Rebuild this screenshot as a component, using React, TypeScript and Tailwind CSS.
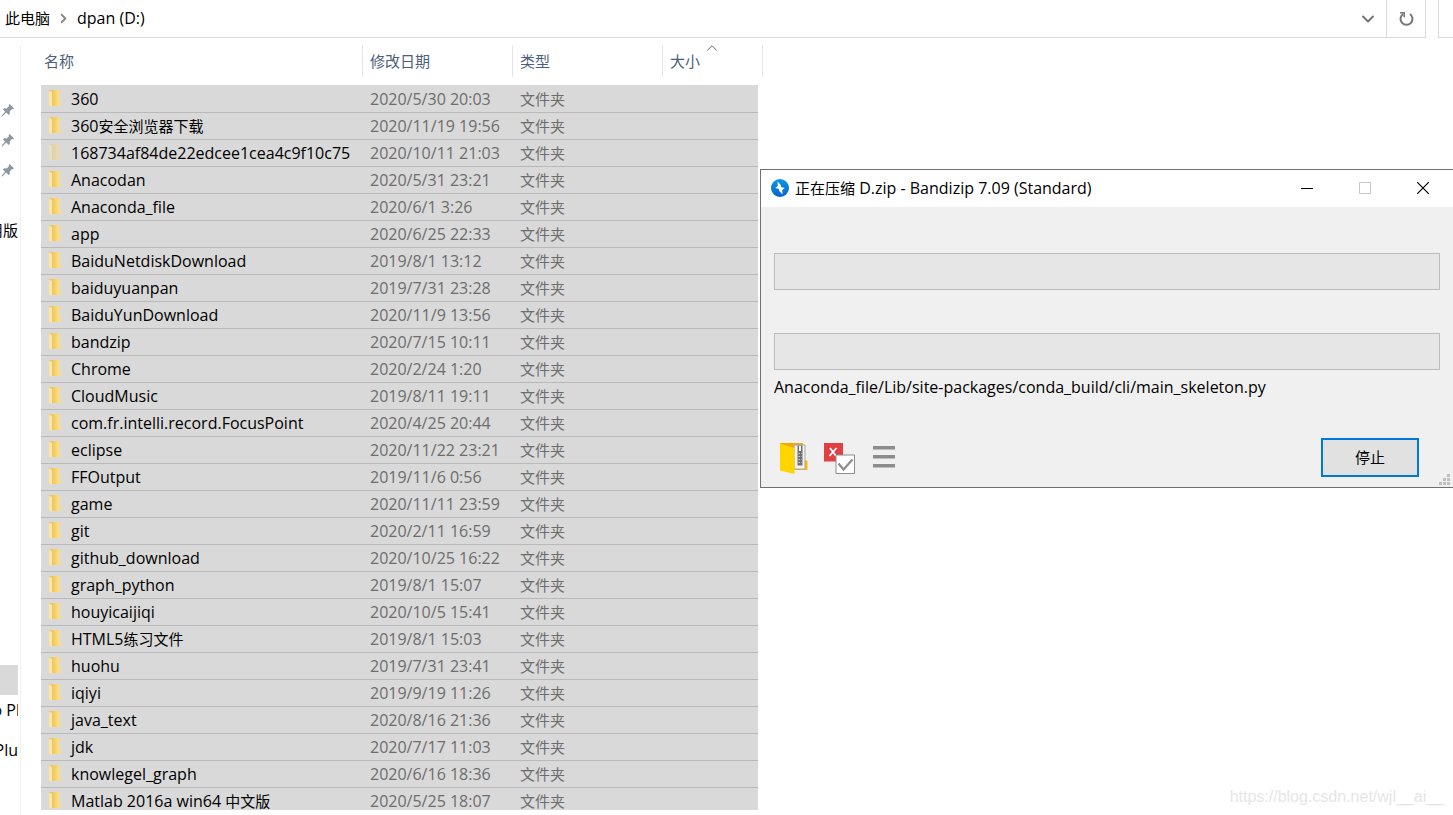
import { ChevronDown, ChevronRight, ChevronUp } from 'lucide-react';

interface Folder {
  name: string;
  date: string;
  hidden?: boolean;
}

const FOLDERS: Folder[] = [
  { name: '360', date: '2020/5/30 20:03' },
  { name: '360安全浏览器下载', date: '2020/11/19 19:56' },
  { name: '168734af84de22edcee1cea4c9f10c75', date: '2020/10/11 21:03', hidden: true },
  { name: 'Anacodan', date: '2020/5/31 23:21' },
  { name: 'Anaconda_file', date: '2020/6/1 3:26' },
  { name: 'app', date: '2020/6/25 22:33' },
  { name: 'BaiduNetdiskDownload', date: '2019/8/1 13:12' },
  { name: 'baiduyuanpan', date: '2019/7/31 23:28' },
  { name: 'BaiduYunDownload', date: '2020/11/9 13:56' },
  { name: 'bandzip', date: '2020/7/15 10:11' },
  { name: 'Chrome', date: '2020/2/24 1:20' },
  { name: 'CloudMusic', date: '2019/8/11 19:11' },
  { name: 'com.fr.intelli.record.FocusPoint', date: '2020/4/25 20:44' },
  { name: 'eclipse', date: '2020/11/22 23:21' },
  { name: 'FFOutput', date: '2019/11/6 0:56' },
  { name: 'game', date: '2020/11/11 23:59' },
  { name: 'git', date: '2020/2/11 16:59' },
  { name: 'github_download', date: '2020/10/25 16:22' },
  { name: 'graph_python', date: '2019/8/1 15:07' },
  { name: 'houyicaijiqi', date: '2020/10/5 15:41' },
  { name: 'HTML5练习文件', date: '2019/8/1 15:03' },
  { name: 'huohu', date: '2019/7/31 23:41' },
  { name: 'iqiyi', date: '2019/9/19 11:26' },
  { name: 'java_text', date: '2020/8/16 21:36' },
  { name: 'jdk', date: '2020/7/17 11:03' },
  { name: 'knowlegel_graph', date: '2020/6/16 18:36' },
  { name: 'Matlab 2016a win64 中文版', date: '2020/5/25 18:07' },
];

// Chinese runs are set one pixel smaller than the Latin text around them
function Label({ text }: { text: string }) {
  return (
    <>
      {text.split(/([\u4e00-\u9fff]+)/).map((part, i) =>
        i % 2 ? <span key={i} className="text-[15px]">{part}</span> : part
      )}
    </>
  );
}

function FolderIcon({ hidden }: { hidden?: boolean }) {
  return (
    <svg width="13" height="18" viewBox="0 0 13 18" className={hidden ? 'opacity-40' : ''} aria-hidden="true">
      <defs>
        <linearGradient id="folder" x1="0" y1="0" x2="1" y2="0">
          <stop offset="0.3" stopColor="#ebc765" />
          <stop offset="0.8" stopColor="#fcdc7c" />
        </linearGradient>
      </defs>
      <path d="M1 0h10.500v10.500l1 1v4.500H4z" fill="url(#folder)" />
      <path d="M1 0.500l3 1.500v15L1 15.500z" fill="#ffe6a0" />
    </svg>
  );
}

function PinIcon() {
  return (
    <svg width="14" height="14" viewBox="0 0 14 14" fill="#8b98a3" aria-hidden="true">
      <path d="M8.500 1l4.500 4.200-1 1.100-1-.2-2.300 2.400.2 2.300-1.200 1.300-2.500-2.500L1.500 13.200 0.600 13.400 0.800 12.500 4.100 8.700 1.900 6.400 3.200 5.300l2.300.2L8 3.200 7.600 2z" />
    </svg>
  );
}

function RefreshIcon() {
  return (
    <svg width="16" height="16" viewBox="0 0 16 16" fill="none" stroke="#767676" strokeWidth="2" aria-hidden="true">
      <path d="M12 3A6 6 0 1 1 5 3" />
      <path d="M2 1.800H6.200v4.500" strokeWidth="1.600" />
    </svg>
  );
}

function BandizipLogo() {
  return (
    <svg width="18" height="18" viewBox="0 0 18 18" aria-hidden="true">
      <defs>
        <linearGradient id="logo" x1="0" y1="0" x2="0" y2="1">
          <stop offset="0" stopColor="#0a97e6" />
          <stop offset="1" stopColor="#0663cf" />
        </linearGradient>
      </defs>
      <circle cx="9" cy="9" r="9" fill="url(#logo)" />
      <path d="M6.600 2.600L10 6.200 9.900 8 13.800 9 11.200 11 11.600 15.400 8 11.800 8.100 10 4.200 8.900 6.800 7z" fill="#fff" />
    </svg>
  );
}

function ZipFolderIcon() {
  return (
    <svg width="28" height="32" viewBox="0 0 28 32" aria-hidden="true">
      <path d="M0 1h23v5H0z" fill="#f5a900" />
      <path d="M20 18h6l1.500 1.500V28H14z" fill="#ffb900" />
      <path d="M14 3h11v24H14z" fill="#f3f3f3" stroke="#a5a5a5" />
      <path d="M17.500 3.500h5v20h-5z" fill="#707070" />
      <path d="M19 4h2v5h-2z" fill="#f5f5f5" />
      <path d="M18.500 11.500h3M18.500 14.500h3M18.500 17.500h3M18.500 20.500h3" stroke="#d0d0d0" strokeDasharray="1.500 1" />
      <path d="M0 1.500l14.500 4.500V32L0 28.500z" fill="#ffd500" />
    </svg>
  );
}

function ResultIcon() {
  return (
    <svg width="32" height="32" viewBox="0 0 32 32" fill="none" aria-hidden="true">
      <path d="M0 1h19v18.500H0z" fill="#e04043" />
      <path d="M6 6l6 8M12.500 6l-7 8" stroke="#fff" strokeWidth="1.800" />
      <path d="M12 13h18.500v18.500H12z" fill="#fff" stroke="#8d8d8d" />
      <path d="M14.500 21.500l5 6 9-10" stroke="#8d8d8d" strokeWidth="2.200" />
    </svg>
  );
}

function MenuIcon() {
  return (
    <svg width="22" height="24" viewBox="0 0 22 24" fill="#8c8c8c" aria-hidden="true">
      <path d="M0 0h22v3.500H0zM0 9h22v3.500H0zM0 18h22v3.500H0z" />
    </svg>
  );
}

function ResizeGrip() {
  return (
    <svg width="11" height="11" viewBox="0 0 11 11" fill="#bfbfbf" className="absolute right-[3px] bottom-[2px]" aria-hidden="true">
      <path d="M8 0h3v3H8zM4 4h3v3H4zM8 4h3v3H8zM0 8h3v3H0zM4 8h3v3H4zM8 8h3v3H8z" />
    </svg>
  );
}

function AddressBar() {
  return (
    <header className="flex h-[38px] shrink-0 gap-3">
      <div className="flex min-w-0 flex-1 border-r border-b border-[#d9d9d9]">
        <nav className="flex flex-1 items-center pb-px pl-[5px]" aria-label="路径">
          <a href="#pc" className="text-[15px]">此电脑</a>
          <ChevronRight size={15} strokeWidth={3} className="mx-[6px] text-[#8a8a8a]" />
          <a href="#d">dpan (D:)</a>
        </nav>
        <button type="button" aria-label="历史" className="flex w-9 items-center justify-center text-[#767676]">
          <ChevronDown size={20} strokeWidth={2.5} />
        </button>
        <button type="button" aria-label="刷新" className="flex w-[39px] items-center justify-center border-l border-[#d9d9d9]">
          <RefreshIcon />
        </button>
      </div>
      <div className="w-[15px] border-b border-l border-[#d9d9d9]" />
    </header>
  );
}

function Sidebar() {
  return (
    <aside className="mt-[7px] w-[21px] shrink-0 overflow-hidden border-r border-[#f0f0f0] pt-[50px] pr-[2px]">
      {[0, 1, 2].map((i) => (
        <div key={i} className="flex h-[30px] items-center pl-px">
          <PinIcon />
        </div>
      ))}
      <div className="mt-[30px] flex h-[30px] items-center justify-end overflow-hidden text-[15px] whitespace-nowrap">用版</div>
      <div className="mt-[420px] h-[30px] bg-[#d9d9d9]" />
      <div className="flex h-[30px] items-center justify-end overflow-hidden whitespace-nowrap">
        <span className="-mr-[2px]">o Pl</span>
      </div>
      <div className="mt-[10px] flex h-[30px] items-center justify-end overflow-hidden whitespace-nowrap">Plu</div>
    </aside>
  );
}

function FileList() {
  return (
    <main className="mt-[7px] mb-[5px] ml-5 overflow-hidden">
      <table className="w-[722px] table-fixed border-separate border-spacing-0 text-left whitespace-nowrap">
        <thead>
          <tr className="h-8 text-[15px] text-[#4c607a]">
            <th className="w-[322px] border-r border-[#e5e5e5] p-0 pl-[3px] font-normal">名称</th>
            <th className="w-[150px] border-r border-[#e5e5e5] p-0 pl-[7px] font-normal">修改日期</th>
            <th className="w-[150px] border-r border-[#e5e5e5] p-0 pl-[7px] font-normal">类型</th>
            <th className="relative w-[100px] border-r border-[#e5e5e5] p-0 pl-[7px] font-normal">
              大小
              <ChevronUp size={18} strokeWidth={1} className="absolute -top-[6px] left-10 text-[#333]" />
            </th>
          </tr>
          <tr className="h-2" />
        </thead>
        <tbody className="text-[#6d6d6d]">
          {FOLDERS.map((f) => (
            <tr key={f.name} className="group h-[27px]">
              <td className="border-t border-[#b9b9b9] bg-[#d9d9d9] p-0 pl-[7px] text-black group-first:border-[#d9d9d9]">
                <div className="flex h-[26px] items-center gap-[10px]">
                  <FolderIcon hidden={f.hidden} />
                  <span><Label text={f.name} /></span>
                </div>
              </td>
              <td className="border-t border-[#b9b9b9] bg-[#d9d9d9] p-0 pl-[7px] group-first:border-[#d9d9d9]">{f.date}</td>
              <td className="border-t border-[#b9b9b9] bg-[#d9d9d9] p-0 pl-[7px] text-[15px] group-first:border-[#d9d9d9]">文件夹</td>
              <td className="p-0 pr-[5px]">
                <div className="h-[27px] border-t border-[#b9b9b9] bg-[#d9d9d9] group-first:border-[#d9d9d9]" />
              </td>
            </tr>
          ))}
        </tbody>
      </table>
    </main>
  );
}

function CompressDialog() {
  return (
    <section role="dialog" aria-labelledby="dialog-title" className="absolute top-[169px] right-0 left-[760px] border-y border-l border-[#707070] bg-[#f0f0f0]">
      <div className="flex h-[37px] bg-white pr-px pb-px pl-[10px]">
        <h1 id="dialog-title" className="flex flex-1 items-center gap-[6px] whitespace-nowrap">
          <BandizipLogo />
          <span><Label text="正在压缩 D.zip - Bandizip 7.09 (Standard)" /></span>
        </h1>
        <button type="button" aria-label="最小化" className="flex w-[58px] items-center justify-center">
          <span className="h-px w-3 bg-black" />
        </button>
        <button type="button" aria-label="最大化" disabled className="flex w-[58px] items-center justify-center">
          <span className="size-3 border border-[#c8c8c8]" />
        </button>
        <button type="button" aria-label="关闭" className="flex w-[58px] items-center justify-center">
          <svg width="12" height="12" viewBox="0 0 12 12" stroke="#000" strokeWidth="1.200" aria-hidden="true">
            <path d="M0 0l12 12M12 0L0 12" />
          </svg>
        </button>
      </div>
      <div className="px-[13px] pt-[46px] pb-[10px]">
        <div role="progressbar" aria-label="当前文件" className="h-[37px] border border-[#bcbcbc] bg-[#e6e6e6]" />
        <div role="progressbar" aria-label="总进度" className="mt-[43px] h-[37px] border border-[#bcbcbc] bg-[#e6e6e6]" />
        <p className="mt-[5px] leading-6 whitespace-nowrap">Anaconda_file/Lib/site-packages/conda_build/cli/main_skeleton.py</p>
        <div className="mt-[39px] flex items-center pr-[21px] pl-[6px]">
          <button type="button" aria-label="打开文件夹"><ZipFolderIcon /></button>
          <button type="button" aria-label="完成后的操作" className="ml-4"><ResultIcon /></button>
          <button type="button" aria-label="菜单" className="ml-[17px]"><MenuIcon /></button>
          <button type="button" className="ml-auto h-[39px] w-[98px] border-2 border-[#0078d7] bg-[#e1e1e1] pb-px text-[15px]">停止</button>
        </div>
      </div>
      <ResizeGrip />
    </section>
  );
}

export default function App() {
  return (
    <div className="relative flex h-screen flex-col overflow-hidden bg-white font-['Open_Sans','Noto_Sans_CJK_SC',sans-serif] text-base leading-6 text-black">
      <AddressBar />
      <div className="flex min-h-0 flex-1">
        <Sidebar />
        <FileList />
      </div>
      <CompressDialog />
      <p className="absolute right-[9px] bottom-[6px] font-['Liberation_Sans',sans-serif] text-[#e6e6e6]">https://blog.csdn.net/wjl__ai__</p>
    </div>
  );
}
